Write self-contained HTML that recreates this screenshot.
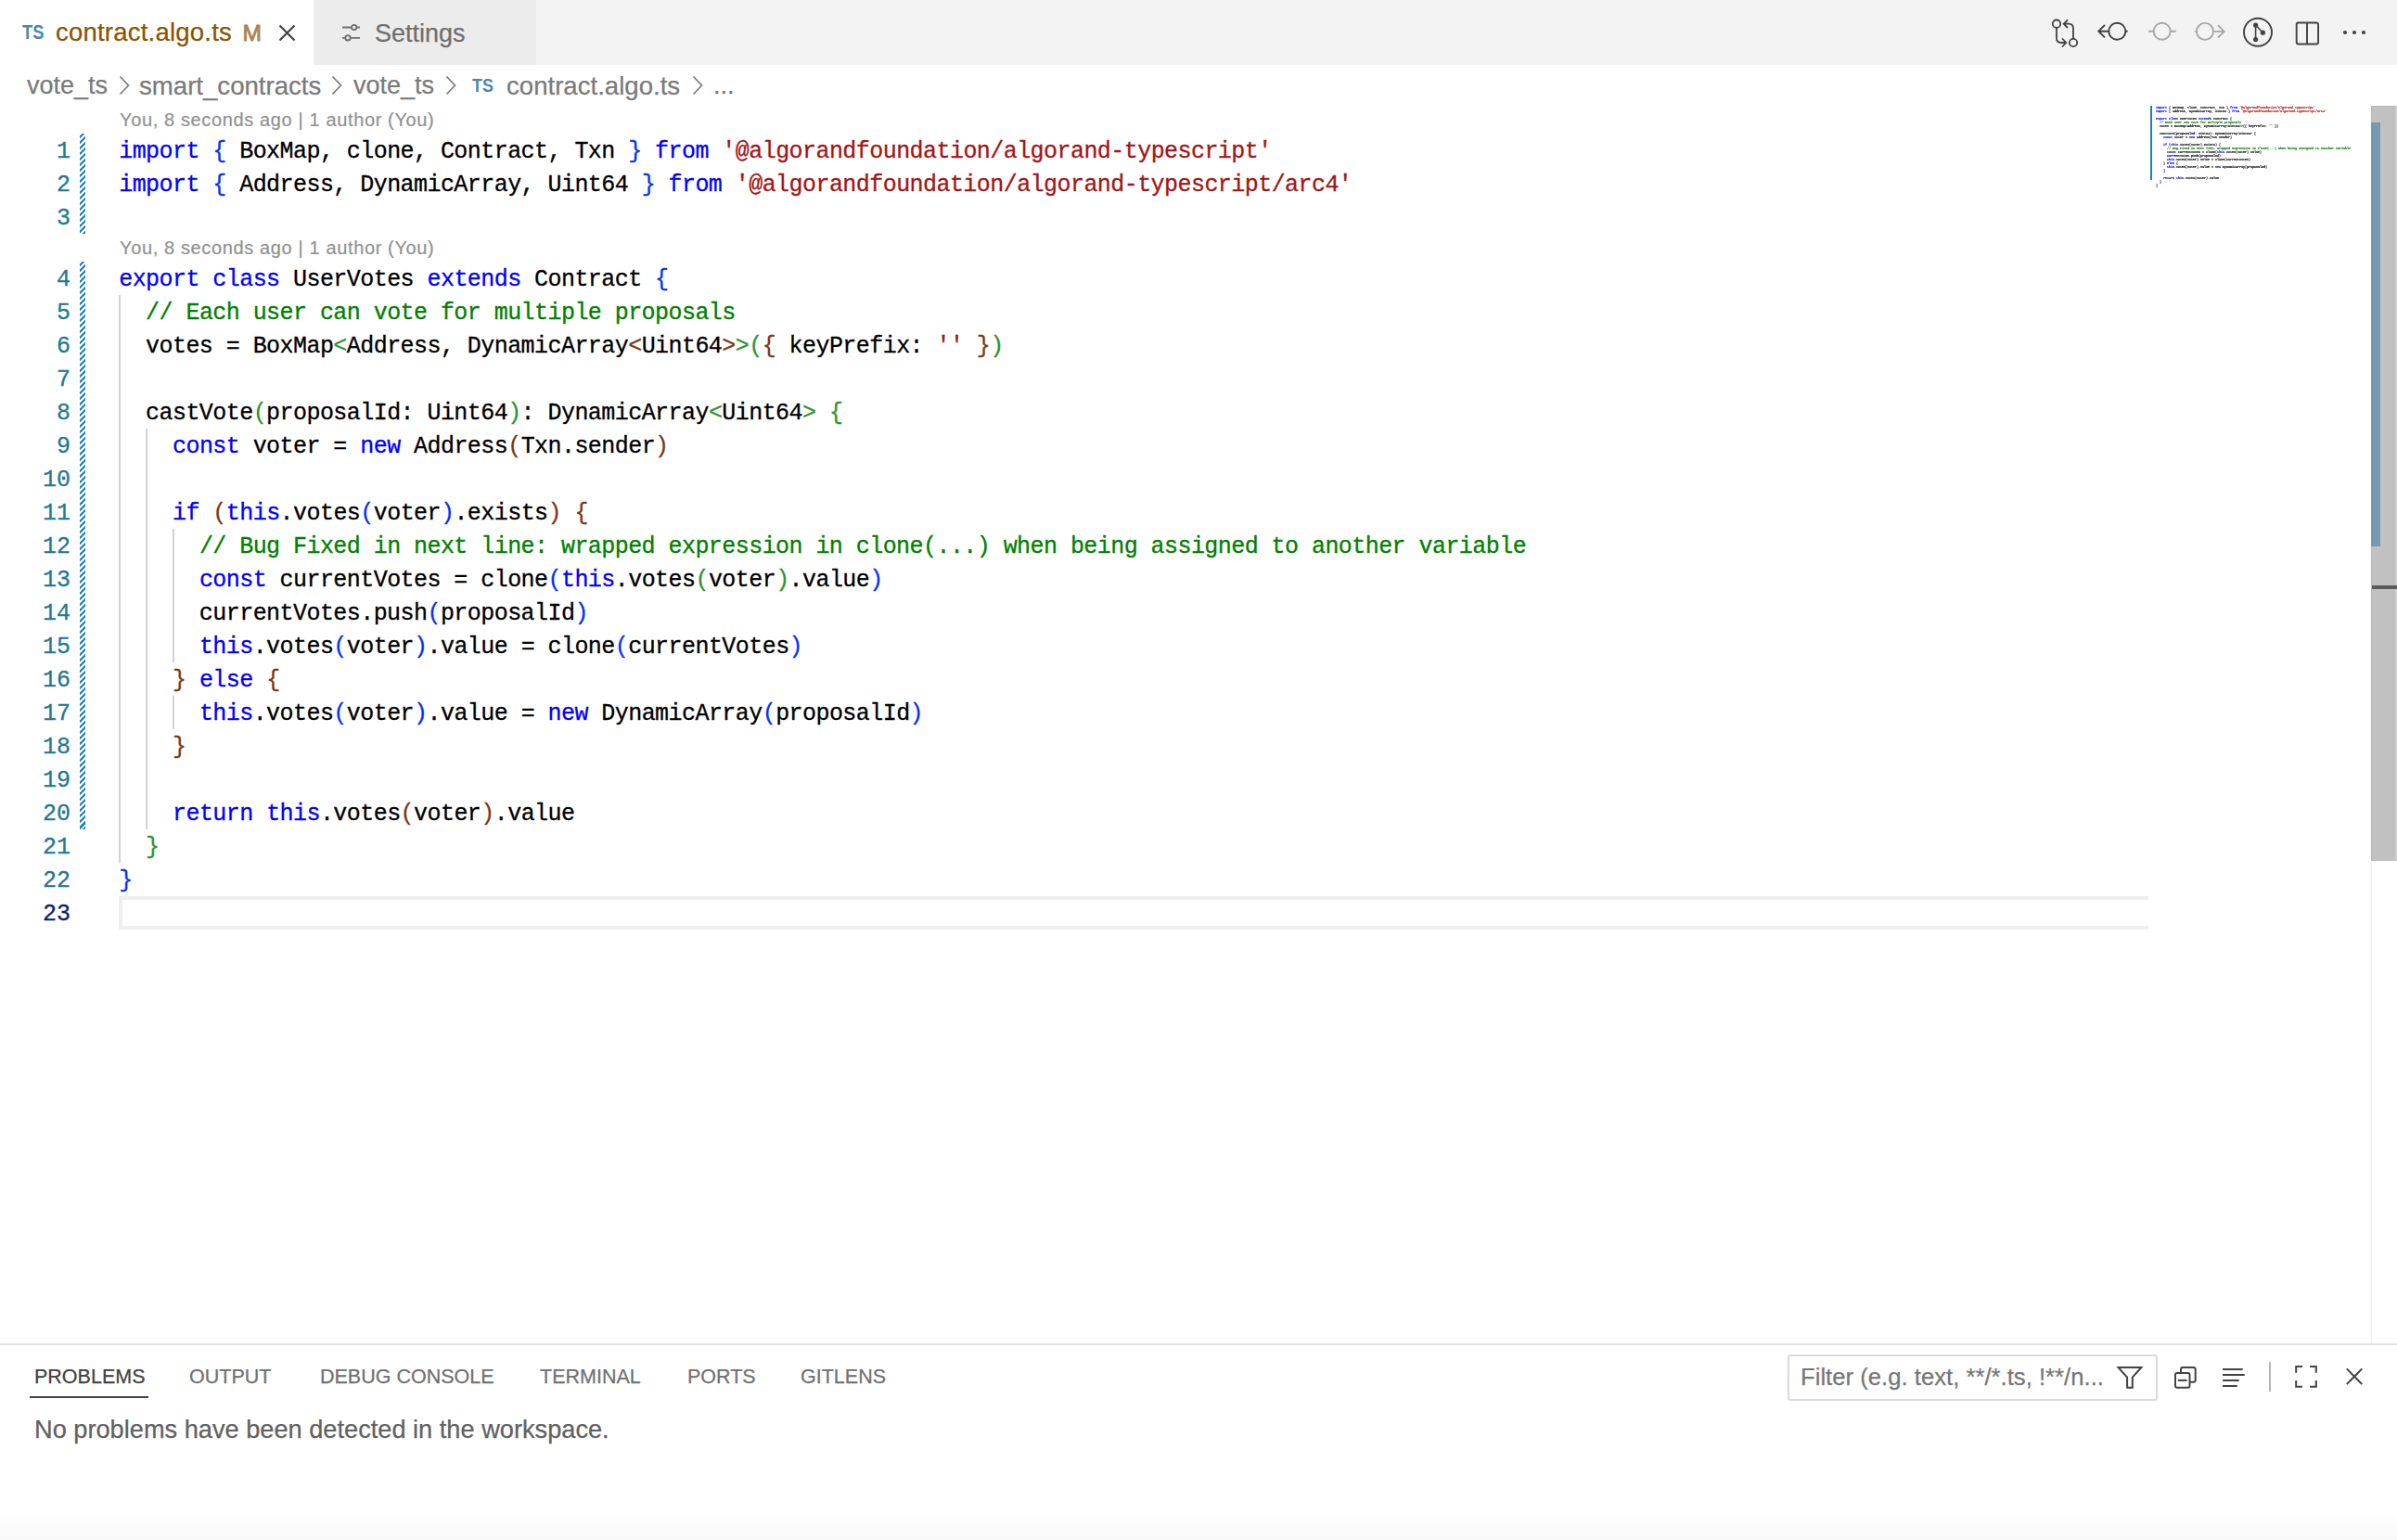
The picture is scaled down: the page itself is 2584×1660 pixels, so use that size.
<!DOCTYPE html>
<html><head><meta charset="utf-8">
<style>
*{margin:0;padding:0;box-sizing:border-box}
html,body{width:2584px;height:1660px;overflow:hidden;background:#fff;position:relative}
body{font-family:"Liberation Sans",sans-serif}
.abs{position:absolute}
#tabbar{position:absolute;left:0;top:0;width:2584px;height:70px;background:#f3f3f3}
#tab1{position:absolute;left:0;top:0;width:338px;height:70px;background:#fff}
#tab2{position:absolute;left:338px;top:0;width:240px;height:70px;background:#ececec}
.ui{position:absolute;white-space:pre;line-height:1;-webkit-text-stroke:0.25px currentColor}
.ln{position:absolute;left:128.2px;height:36px;line-height:36px;padding-top:1.5px;font-family:"Liberation Mono",monospace;font-size:25px;letter-spacing:-0.556px;-webkit-text-stroke:0.3px currentColor;white-space:pre;color:#000}
.num{position:absolute;left:0;width:76px;text-align:right;height:36px;line-height:36px;padding-top:1.5px;font-family:"Liberation Mono",monospace;font-size:25px;-webkit-text-stroke:0.3px currentColor;color:#237893;white-space:pre}
.num.act{color:#0b216f}
.kw{color:#0000ff} .str{color:#a31515} .com{color:#008000}
.b1{color:#0431fa} .b2{color:#319331} .b3{color:#7b3814}
.guide{position:absolute;width:2px;background:#d3d3d3}
.hatch{position:absolute;left:86px;width:6px;background:repeating-linear-gradient(-45deg,#1f82c4 0 2.5px,transparent 2.5px 4.243px)}
.lens{position:absolute;left:129px;font-size:20px;letter-spacing:0.63px;color:#919191;white-space:pre;line-height:1;-webkit-text-stroke:0.2px currentColor}
#minimap{position:absolute;left:2324px;top:114px;width:232px;height:100px;overflow:visible}
#miniinner{position:absolute;left:0;top:0;transform-origin:0 0;transform:scale(0.13158,0.11111)}
.mln .b1,.mln .b2,.mln .b3{color:#222}
.mln{position:absolute;left:0;height:36px;line-height:36px;font-family:"Liberation Mono",monospace;font-size:26px;font-weight:bold;letter-spacing:-0.4px;-webkit-text-stroke:0.8px currentColor;white-space:pre;color:#000}
svg{position:absolute;overflow:visible}
</style></head><body>
<div id="tabbar"></div>
<div id="tab1"></div>
<div id="tab2"></div>
<!-- tab 1 -->
<div class="ui" style="left:23.5px;top:25px;font-size:21.5px;font-weight:bold;color:#4a88ad;transform-origin:0 0;transform:scaleX(0.85);-webkit-text-stroke:0">TS</div>
<div class="ui" style="left:60px;top:21px;font-size:27.5px;letter-spacing:0.22px;color:#895503">contract.algo.ts</div>
<div class="ui" style="left:261.5px;top:24px;font-size:24.5px;color:#ad8550;-webkit-text-stroke:0.9px #ad8550">M</div>
<svg style="left:300px;top:26px" width="20" height="20" viewBox="0 0 20 20"><path d="M1.5 1.5 L17.5 17.5 M17.5 1.5 L1.5 17.5" stroke="#424242" stroke-width="2.2" fill="none"/></svg>
<!-- tab 2 -->
<svg style="left:366px;top:24px" width="24" height="22" viewBox="0 0 24 22"><g stroke="#6f6f6f" stroke-width="1.8" fill="none"><path d="M3 5.5 H13 M18.5 5.5 H22"/><circle cx="15.7" cy="5.5" r="2.7"/><path d="M3 16.8 H6.3 M11.8 16.8 H22"/><circle cx="9" cy="16.8" r="2.7"/></g></svg>
<div class="ui" style="left:404px;top:23px;font-size:27px;color:#6f6f6f">Settings</div>
<!-- right tab actions -->
<svg style="left:2200px;top:10px" width="60" height="50" viewBox="0 0 60 50"><g stroke="#424242" stroke-width="1.8" fill="none" stroke-linecap="butt">
<circle cx="17" cy="15.7" r="4.2"/><path d="M17 20 V31 Q17 36 22 36 H27"/><path d="M23 31.5 L27.3 36 L23 40.5"/>
<circle cx="35" cy="36" r="4.2"/><path d="M35 31.7 V21 Q35 15.7 30 15.7 H24.7"/><path d="M29 11.5 L24.7 15.7 L29 20"/></g></svg>
<svg style="left:2255px;top:10px" width="50" height="50" viewBox="0 0 50 50"><g stroke="#424242" stroke-width="1.9" fill="none">
<path d="M14 17 L7.3 23.7 L14 30.4 M7.5 23.7 H18"/><circle cx="27.3" cy="23.7" r="9"/><path d="M36.3 23.7 H38.7"/></g></svg>
<svg style="left:2305px;top:10px" width="50" height="50" viewBox="0 0 50 50"><g stroke="#a8a8a8" stroke-width="1.9" fill="none">
<path d="M11 23.7 H16.7 M34.7 23.7 H40.7"/><circle cx="25.7" cy="23.7" r="9"/></g></svg>
<svg style="left:2355px;top:10px" width="50" height="50" viewBox="0 0 50 50"><g stroke="#a8a8a8" stroke-width="1.9" fill="none">
<path d="M11 23.9 H13 M31 23.9 H42.5 M36 17.3 L42.7 23.9 L36 30.5"/><circle cx="22" cy="23.9" r="9"/></g></svg>
<svg style="left:2405px;top:10px" width="50" height="50" viewBox="0 0 50 50"><g stroke="#424242" stroke-width="1.9" fill="#424242">
<circle cx="29" cy="24.8" r="15" fill="none"/><path d="M26.6 17 V32.6 M26.6 17 L34.4 25.2" fill="none" stroke-width="1.6"/><circle cx="26.6" cy="17" r="2.6" stroke="none"/><circle cx="34.4" cy="25.2" r="2.6" stroke="none"/><circle cx="26.6" cy="32.6" r="2.6" stroke="none"/></g></svg>
<svg style="left:2470px;top:20px" width="34" height="34" viewBox="0 0 34 34"><g stroke="#424242" stroke-width="1.9" fill="none">
<rect x="5.7" y="4.5" width="23.4" height="23" rx="2"/><path d="M17 4.5 V27.5"/></g></svg>
<svg style="left:2520px;top:25px" width="34" height="20" viewBox="0 0 34 20"><g fill="#424242"><circle cx="8" cy="10" r="2.1"/><circle cx="18" cy="10" r="2.1"/><circle cx="28" cy="10" r="2.1"/></g></svg>

<!-- breadcrumbs -->
<div class="ui" style="left:29px;top:79px;font-size:27px;color:#7a7a7a">vote_ts</div>
<svg style="left:126px;top:80px" width="16" height="24" viewBox="0 0 16 24"><path d="M3.5 2.5 L12.5 12 L3.5 21.5" stroke="#7a7a7a" stroke-width="1.7" fill="none"/></svg>
<div class="ui" style="left:150px;top:79px;font-size:27.6px;color:#7a7a7a">smart_contracts</div>
<svg style="left:355px;top:80px" width="16" height="24" viewBox="0 0 16 24"><path d="M3.5 2.5 L12.5 12 L3.5 21.5" stroke="#7a7a7a" stroke-width="1.7" fill="none"/></svg>
<div class="ui" style="left:381px;top:79px;font-size:27px;color:#7a7a7a">vote_ts</div>
<svg style="left:478px;top:80px" width="16" height="24" viewBox="0 0 16 24"><path d="M3.5 2.5 L12.5 12 L3.5 21.5" stroke="#7a7a7a" stroke-width="1.7" fill="none"/></svg>
<div class="ui" style="left:509px;top:81.5px;font-size:20.5px;font-weight:bold;color:#4a88ad;transform-origin:0 0;transform:scaleX(0.87);-webkit-text-stroke:0">TS</div>
<div class="ui" style="left:546px;top:79px;font-size:27.6px;color:#7a7a7a">contract.algo.ts</div>
<svg style="left:744px;top:80px" width="16" height="24" viewBox="0 0 16 24"><path d="M3.5 2.5 L12.5 12 L3.5 21.5" stroke="#7a7a7a" stroke-width="1.7" fill="none"/></svg>
<div class="ui" style="left:769px;top:79px;font-size:27px;color:#7a7a7a">...</div>

<!-- codelens -->
<div class="lens" style="top:119px">You, 8 seconds ago | 1 author (You)</div>
<div class="lens" style="top:257px">You, 8 seconds ago | 1 author (You)</div>

<!-- hatch -->
<div class="hatch" style="top:144px;height:108px"></div>
<div class="hatch" style="top:282px;height:612px"></div>

<!-- current line -->
<div class="abs" style="left:128px;top:966px;width:2188px;height:36px;border:4px solid #efefef;border-right:0"></div>

<div class="guide" style="left:128.0px;top:318px;height:612px"></div><div class="guide" style="left:156.9px;top:462px;height:432px"></div><div class="guide" style="left:185.8px;top:570px;height:144px"></div><div class="guide" style="left:185.8px;top:750px;height:36px"></div>
<div class="num" style="top:144px">1</div><div class="num" style="top:180px">2</div><div class="num" style="top:216px">3</div><div class="num" style="top:282px">4</div><div class="num" style="top:318px">5</div><div class="num" style="top:354px">6</div><div class="num" style="top:390px">7</div><div class="num" style="top:426px">8</div><div class="num" style="top:462px">9</div><div class="num" style="top:498px">10</div><div class="num" style="top:534px">11</div><div class="num" style="top:570px">12</div><div class="num" style="top:606px">13</div><div class="num" style="top:642px">14</div><div class="num" style="top:678px">15</div><div class="num" style="top:714px">16</div><div class="num" style="top:750px">17</div><div class="num" style="top:786px">18</div><div class="num" style="top:822px">19</div><div class="num" style="top:858px">20</div><div class="num" style="top:894px">21</div><div class="num" style="top:930px">22</div><div class="num act" style="top:966px">23</div>
<div class="ln" style="top:144px"><span class="kw">import</span> <span class="b1">{</span> BoxMap, clone, Contract, Txn <span class="b1">}</span> <span class="kw">from</span> <span class="str">'@algorandfoundation/algorand-typescript'</span></div><div class="ln" style="top:180px"><span class="kw">import</span> <span class="b1">{</span> Address, DynamicArray, Uint64 <span class="b1">}</span> <span class="kw">from</span> <span class="str">'@algorandfoundation/algorand-typescript/arc4'</span></div><div class="ln" style="top:216px"></div><div class="ln" style="top:282px"><span class="kw">export</span> <span class="kw">class</span> UserVotes <span class="kw">extends</span> Contract <span class="b1">{</span></div><div class="ln" style="top:318px">  <span class="com">// Each user can vote for multiple proposals</span></div><div class="ln" style="top:354px">  votes = BoxMap<span class="b2">&lt;</span>Address, DynamicArray<span class="b3">&lt;</span>Uint64<span class="b3">&gt;</span><span class="b2">&gt;</span><span class="b2">(</span><span class="b3">{</span> keyPrefix: <span class="str">''</span> <span class="b3">}</span><span class="b2">)</span></div><div class="ln" style="top:390px"></div><div class="ln" style="top:426px">  castVote<span class="b2">(</span>proposalId: Uint64<span class="b2">)</span>: DynamicArray<span class="b2">&lt;</span>Uint64<span class="b2">&gt;</span> <span class="b2">{</span></div><div class="ln" style="top:462px">    <span class="kw">const</span> voter = <span class="kw">new</span> Address<span class="b3">(</span>Txn.sender<span class="b3">)</span></div><div class="ln" style="top:498px"></div><div class="ln" style="top:534px">    <span class="kw">if</span> <span class="b3">(</span><span class="kw">this</span>.votes<span class="b1">(</span>voter<span class="b1">)</span>.exists<span class="b3">)</span> <span class="b3">{</span></div><div class="ln" style="top:570px">      <span class="com">// Bug Fixed in next line: wrapped expression in clone(...) when being assigned to another variable</span></div><div class="ln" style="top:606px">      <span class="kw">const</span> currentVotes = clone<span class="b1">(</span><span class="kw">this</span>.votes<span class="b2">(</span>voter<span class="b2">)</span>.value<span class="b1">)</span></div><div class="ln" style="top:642px">      currentVotes.push<span class="b1">(</span>proposalId<span class="b1">)</span></div><div class="ln" style="top:678px">      <span class="kw">this</span>.votes<span class="b1">(</span>voter<span class="b1">)</span>.value = clone<span class="b1">(</span>currentVotes<span class="b1">)</span></div><div class="ln" style="top:714px">    <span class="b3">}</span> <span class="kw">else</span> <span class="b3">{</span></div><div class="ln" style="top:750px">      <span class="kw">this</span>.votes<span class="b1">(</span>voter<span class="b1">)</span>.value = <span class="kw">new</span> DynamicArray<span class="b1">(</span>proposalId<span class="b1">)</span></div><div class="ln" style="top:786px">    <span class="b3">}</span></div><div class="ln" style="top:822px"></div><div class="ln" style="top:858px">    <span class="kw">return</span> <span class="kw">this</span>.votes<span class="b3">(</span>voter<span class="b3">)</span>.value</div><div class="ln" style="top:894px">  <span class="b2">}</span></div><div class="ln" style="top:930px"><span class="b1">}</span></div><div class="ln" style="top:966px"></div>

<!-- minimap -->
<div class="abs" style="left:2318px;top:114px;width:2px;height:80px;background:#1e7fc0"></div>
<div id="minimap"><div id="miniinner"><div class="mln" style="top:0px"><span class="kw">import</span> <span class="b1">{</span> BoxMap, clone, Contract, Txn <span class="b1">}</span> <span class="kw">from</span> <span class="str">'@algorandfoundation/algorand-typescript'</span></div><div class="mln" style="top:36px"><span class="kw">import</span> <span class="b1">{</span> Address, DynamicArray, Uint64 <span class="b1">}</span> <span class="kw">from</span> <span class="str">'@algorandfoundation/algorand-typescript/arc4'</span></div><div class="mln" style="top:72px"></div><div class="mln" style="top:108px"><span class="kw">export</span> <span class="kw">class</span> UserVotes <span class="kw">extends</span> Contract <span class="b1">{</span></div><div class="mln" style="top:144px">  <span class="com">// Each user can vote for multiple proposals</span></div><div class="mln" style="top:180px">  votes = BoxMap<span class="b2">&lt;</span>Address, DynamicArray<span class="b3">&lt;</span>Uint64<span class="b3">&gt;</span><span class="b2">&gt;</span><span class="b2">(</span><span class="b3">{</span> keyPrefix: <span class="str">''</span> <span class="b3">}</span><span class="b2">)</span></div><div class="mln" style="top:216px"></div><div class="mln" style="top:252px">  castVote<span class="b2">(</span>proposalId: Uint64<span class="b2">)</span>: DynamicArray<span class="b2">&lt;</span>Uint64<span class="b2">&gt;</span> <span class="b2">{</span></div><div class="mln" style="top:288px">    <span class="kw">const</span> voter = <span class="kw">new</span> Address<span class="b3">(</span>Txn.sender<span class="b3">)</span></div><div class="mln" style="top:324px"></div><div class="mln" style="top:360px">    <span class="kw">if</span> <span class="b3">(</span><span class="kw">this</span>.votes<span class="b1">(</span>voter<span class="b1">)</span>.exists<span class="b3">)</span> <span class="b3">{</span></div><div class="mln" style="top:396px">      <span class="com">// Bug Fixed in next line: wrapped expression in clone(...) when being assigned to another variable</span></div><div class="mln" style="top:432px">      <span class="kw">const</span> currentVotes = clone<span class="b1">(</span><span class="kw">this</span>.votes<span class="b2">(</span>voter<span class="b2">)</span>.value<span class="b1">)</span></div><div class="mln" style="top:468px">      currentVotes.push<span class="b1">(</span>proposalId<span class="b1">)</span></div><div class="mln" style="top:504px">      <span class="kw">this</span>.votes<span class="b1">(</span>voter<span class="b1">)</span>.value = clone<span class="b1">(</span>currentVotes<span class="b1">)</span></div><div class="mln" style="top:540px">    <span class="b3">}</span> <span class="kw">else</span> <span class="b3">{</span></div><div class="mln" style="top:576px">      <span class="kw">this</span>.votes<span class="b1">(</span>voter<span class="b1">)</span>.value = <span class="kw">new</span> DynamicArray<span class="b1">(</span>proposalId<span class="b1">)</span></div><div class="mln" style="top:612px">    <span class="b3">}</span></div><div class="mln" style="top:648px"></div><div class="mln" style="top:684px">    <span class="kw">return</span> <span class="kw">this</span>.votes<span class="b3">(</span>voter<span class="b3">)</span>.value</div><div class="mln" style="top:720px">  <span class="b2">}</span></div><div class="mln" style="top:756px"><span class="b1">}</span></div><div class="mln" style="top:792px"></div></div></div>

<!-- scrollbar / overview ruler -->
<div class="abs" style="left:2556px;top:114px;width:1px;height:1334px;background:#efefef"></div>
<div class="abs" style="left:2556px;top:114px;width:28px;height:814px;background:#c1c1c1;border-top:1px solid #b9b9b9;border-left:1px solid #b9b9b9"></div>
<div class="abs" style="left:2582px;top:114px;width:2px;height:814px;background:#cdcdcd"></div>
<div class="abs" style="left:2556px;top:132px;width:10px;height:457px;background:#7499b0"></div>
<div class="abs" style="left:2557px;top:631px;width:27px;height:4px;background:#5a5a5a"></div>

<!-- panel -->
<div class="abs" style="left:0;top:1448px;width:2584px;height:2px;background:#e2e2e2"></div>
<div class="ui" style="left:37px;top:1474px;font-size:21.5px;color:#424242">PROBLEMS</div>
<div class="abs" style="left:32px;top:1505px;width:128px;height:2px;background:#424242"></div>
<div class="ui" style="left:204px;top:1474px;font-size:21.5px;color:#717171">OUTPUT</div>
<div class="ui" style="left:345px;top:1474px;font-size:21.5px;color:#717171">DEBUG CONSOLE</div>
<div class="ui" style="left:582px;top:1474px;font-size:21.5px;color:#717171">TERMINAL</div>
<div class="ui" style="left:741px;top:1474px;font-size:21.5px;color:#717171">PORTS</div>
<div class="ui" style="left:863px;top:1474px;font-size:21.5px;color:#717171">GITLENS</div>
<div class="ui" style="left:37px;top:1527px;font-size:27.2px;color:#616161">No problems have been detected in the workspace.</div>

<div class="abs" style="left:1927px;top:1460px;width:399px;height:50px;border:2px solid #dadada;border-radius:3px;background:#fff"></div>
<div class="ui" style="left:1941px;top:1472px;font-size:25.7px;color:#767676">Filter (e.g. text, **/*.ts, !**/n...</div>
<svg style="left:2270px;top:1460px" width="160" height="50" viewBox="0 0 160 50"><g stroke="#424242" stroke-width="2" fill="none" stroke-linejoin="miter">
<path d="M13.6 14 H38.4 L28.8 24.7 V35.7 H23.1 V24.7 Z" stroke-miterlimit="3"/>
<path d="M81 19.5 V16 Q81 14 83 14 H94.7 Q96.7 14 96.7 16 V27.7 Q96.7 29.7 94.7 29.7 H91"/>
<rect x="75" y="20" width="15.5" height="15.7" rx="2"/><path d="M78 27.9 H87.7"/>
<path d="M126 15.9 H147.7 M126 21.9 H149.7 M126 27.9 H143.7 M126 33.9 H141.7"/></g></svg>
<div class="abs" style="left:2446px;top:1468px;width:2px;height:32px;background:#b8b8b8"></div>
<svg style="left:2470px;top:1468px" width="32" height="32" viewBox="0 0 32 32"><g stroke="#424242" stroke-width="2" fill="none">
<path d="M5.2 11.8 V5 H12 M20.1 5 H26.8 V11.8 M26.8 20 V26.7 H20.1 M12 26.7 H5.2 V20"/></g></svg>
<svg style="left:2525px;top:1471px" width="26" height="26" viewBox="0 0 26 26"><path d="M4.8 4.4 L21.3 21.1 M21.3 4.4 L4.8 21.1" stroke="#424242" stroke-width="2" fill="none"/></svg>

<div class="abs" style="left:0;top:1628px;width:2584px;height:32px;background:linear-gradient(#ffffff,#f9f9f9)"></div>
</body></html>
